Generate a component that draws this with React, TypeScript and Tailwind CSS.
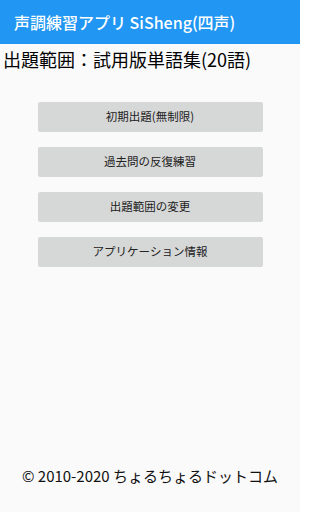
import React from 'react';

const font = { fontFamily: '"Noto Sans CJK JP", "Noto Sans", Roboto, sans-serif' };

const MenuButton: React.FC<{ label: string }> = ({ label }) => (
  <button className="w-[225px] h-[30px] bg-[#d6d7d7] rounded-[2px] text-[11.5px] text-[#222] flex items-center justify-center leading-none">
    {label}
  </button>
);

export default function App() {
  return (
    <div className="w-[300px] h-[512px] bg-[#fafafa] flex flex-col overflow-hidden" style={font}>
      <header className="h-[44px] bg-[#2196f3] flex items-center pl-[14px]">
        <span className="text-white text-[16px] font-medium leading-none">声調練習アプリ SiSheng(四声)</span>
      </header>

      <div className="pl-[3px] pt-[3px] text-[18px] leading-[24px] text-black">
        出題範囲：試用版単語集(20語)
      </div>

      <div className="flex flex-col items-center gap-[15px] mt-[31px]">
        <MenuButton label="初期出題(無制限)" />
        <MenuButton label="過去問の反復練習" />
        <MenuButton label="出題範囲の変更" />
        <MenuButton label="アプリケーション情報" />
      </div>

      <footer className="mt-auto pb-[25px] text-center text-[15px] leading-[22px] text-[#111]">
        © 2010-2020 ちょるちょるドットコム
      </footer>
    </div>
  );
}
